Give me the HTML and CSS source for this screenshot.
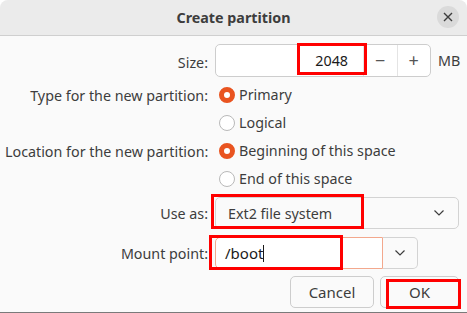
FILE: index.html
```html
<!DOCTYPE html>
<html lang="en">
<head>
  <meta charset="UTF-8" />
  <title>Create partition</title>
  <link rel="stylesheet" href="styles.css">
</head>
<body>
  <div class="dialog">
    <div class="titlebar">
      <span class="title">Create partition</span>
      <button class="close" aria-label="Close">
        <svg width="10" height="10" viewBox="0 0 10 10"><path d="M1 1L9 9M9 1L1 9" stroke="#3d3d3d" stroke-width="1.4"/></svg>
      </button>
    </div>

    <div class="form">
      <label class="label">Size:</label>
      <div class="size-row">
        <div class="spin">
          <div class="spin-entry">2048</div>
          <div class="spin-btn">&minus;</div>
          <div class="spin-btn">+</div>
          <span class="mark mark-size"></span>
        </div>
        <span class="unit">MB</span>
      </div>

      <label class="label radio-label">Type for the new partition:</label>
      <div class="radio checked">Primary</div>
      <span></span>
      <div class="radio">Logical</div>

      <label class="label radio-label">Location for the new partition:</label>
      <div class="radio checked">Beginning of this space</div>
      <span></span>
      <div class="radio">End of this space</div>

      <label class="label combo-label">Use as:</label>
      <div class="combo">
        <span>Ext2 file system</span>
        <svg class="chev" width="12" height="8" viewBox="0 0 12 8"><path d="M1.5 1.5L6 6L10.5 1.5" fill="none" stroke="#3d3d3d" stroke-width="1.2"/></svg>
        <span class="mark mark-use"></span>
      </div>

      <label class="label mount-label">Mount point:</label>
      <div class="mount">
        <div class="mount-entry">/boot<span class="caret"></span></div>
        <div class="mount-btn">
          <svg width="12" height="8" viewBox="0 0 12 8"><path d="M1.5 1.5L6 6L10.5 1.5" fill="none" stroke="#3d3d3d" stroke-width="1.2"/></svg>
        </div>
        <span class="mark mark-mount"></span>
      </div>
    </div>

    <div class="actions">
      <button class="btn">Cancel</button>
      <button class="btn ok">OK<span class="mark mark-ok"></span></button>
    </div>
  </div>
</body>
</html>
```

FILE: styles.css
```css
*, *::before, *::after {
  box-sizing: border-box;
}

html, body {
  margin: 0;
  height: 100%;
  background: #ffffff;
}

body {
  font-family: 'Noto Sans', 'Open Sans', sans-serif;
  font-size: 14.3px;
  color: #3d3d3d;
}

.dialog {
  width: 467px;
  height: 313px;
  background: #fafafa;
  border-bottom: 1px solid #7a7a7a;
  border-radius: 8px 8px 0 0;
  overflow: hidden;
  display: flex;
  flex-direction: column;
}

.titlebar {
  height: 36px;
  background: #ebebeb;
  border-bottom: 1px solid #cfcfcf;
  position: relative;
  display: flex;
  align-items: center;
  justify-content: center;
}

.title {
  font-weight: bold;
  font-size: 14.3px;
  color: #3d3d3d;
}

.close {
  position: absolute;
  right: 8px;
  top: 6px;
  width: 22px;
  height: 22px;
  border-radius: 50%;
  border: none;
  background: #dadada;
  padding: 0;
  display: flex;
  align-items: center;
  justify-content: center;
}

.form {
  display: grid;
  grid-template-columns: 203px 1fr;
  column-gap: 6px;
  padding: 8px 8px 0 5px;
}

.label {
  text-align: right;
  align-self: center;
  white-space: nowrap;
}

.size-row {
  display: flex;
  align-items: center;
  margin-bottom: 4px;
}

.spin {
  position: relative;
  display: flex;
  width: 216px;
  height: 33px;
  background: #ffffff;
  border: 1px solid #cdcdcd;
  border-radius: 5px;
  margin-left: 1px;
}

.spin-entry {
  width: 147px;
  text-align: right;
  padding-right: 15px;
  line-height: 31px;
  color: #1a1a1a;
}

.spin-btn {
  flex: 1;
  border-left: 1px solid #e4e4e4;
  text-align: center;
  line-height: 30px;
  font-size: 18px;
  color: #555;
}

.unit {
  margin-left: 7px;
}

.radio {
  position: relative;
  height: 28px;
  line-height: 28px;
  padding-left: 25px;
  white-space: nowrap;
}

.radio::before {
  content: '';
  position: absolute;
  left: 5px;
  top: 6px;
  width: 16px;
  height: 16px;
  border-radius: 50%;
  border: 1px solid #b9b9b9;
  background: #fff;
}

.radio.checked::before {
  border: 5px solid #e95420;
}

.combo {
  position: relative;
  margin-top: 4px;
  margin-left: 1px;
  height: 32px;
  width: 244px;
  background: #fafafa;
  border: 1px solid #d3d3d3;
  border-radius: 5px;
  display: flex;
  align-items: center;
  justify-content: space-between;
  padding: 0 13px 0 12px;
}

.combo-label {
  margin-top: 4px;
}

.mount {
  position: relative;
  margin-top: 8px;
  margin-left: 1px;
  display: flex;
  height: 32px;
  width: 203px;
}

.mount-label {
  margin-top: 8px;
}

.mount-entry {
  width: 168px;
  background: #ffffff;
  border: 1px solid #f3a88d;
  border-radius: 5px 0 0 5px;
  padding-left: 9px;
  line-height: 30px;
  color: #1a1a1a;
  font-size: 15px;
}

.caret {
  display: inline-block;
  width: 1px;
  height: 17px;
  background: #1a1a1a;
  vertical-align: -3px;
}

.mount-btn {
  flex: 1;
  border: 1px solid #d3d3d3;
  border-left: none;
  border-radius: 0 5px 5px 0;
  display: flex;
  align-items: center;
  justify-content: center;
}

.actions {
  display: flex;
  justify-content: flex-end;
  gap: 6px;
  padding: 7px 8px 0 0;
}

.btn {
  position: relative;
  height: 32px;
  font: inherit;
  font-size: 15px;
  color: #3d3d3d;
  background: #fafafa;
  border: 1px solid #cdcdcd;
  border-radius: 5px;
}

.btn:first-child {
  width: 84px;
}

.btn.ok {
  width: 79px;
}

.mark {
  position: absolute;
  border: 3px solid #ff0000;
  pointer-events: none;
}

.mark-size {
  left: 81px;
  top: -2px;
  width: 70px;
  height: 32px;
}

.mark-use {
  left: -5px;
  top: -4px;
  width: 153px;
  height: 35px;
}

.mark-mount {
  left: -6px;
  top: -2px;
  width: 134px;
  height: 35px;
}

.mark-ok {
  left: 5px;
  top: 2px;
  width: 75px;
  height: 30px;
}
```
